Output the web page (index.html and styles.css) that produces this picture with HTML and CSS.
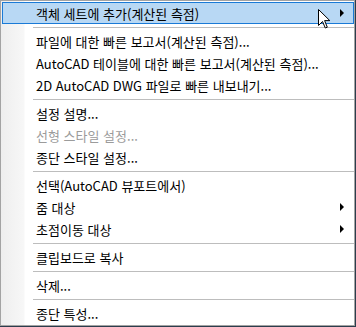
FILE: index.html
```html
<!DOCTYPE html>
<html lang="ko">
<head>
<meta charset="utf-8">
<title>Menu</title>
<link rel="stylesheet" href="styles.css">
</head>
<body>
<div class="menu">
  <div class="item sub hl">객체 세트에 추가(계산된 측점)</div>
  <div class="sep"></div>
  <div class="item">파일에 대한 빠른 보고서(계산된 측점)...</div>
  <div class="item">AutoCAD 테이블에 대한 빠른 보고서(계산된 측점)...</div>
  <div class="item">2D AutoCAD DWG 파일로 빠른 내보내기...</div>
  <div class="sep"></div>
  <div class="item">설정 설명...</div>
  <div class="item disabled">선형 스타일 설정...</div>
  <div class="item">종단 스타일 설정...</div>
  <div class="sep"></div>
  <div class="item">선택(AutoCAD 뷰포트에서)</div>
  <div class="item sub">줌 대상</div>
  <div class="item sub">초점이동 대상</div>
  <div class="sep"></div>
  <div class="item">클립보드로 복사</div>
  <div class="sep"></div>
  <div class="item">삭제...</div>
  <div class="sep"></div>
  <div class="item">종단 특성...</div>
</div>
<svg class="cursor" width="13" height="21" viewBox="0 0 13 21">
  <path d="M0.5 0.5 L0.5 16.5 L4.5 12.5 L7.3 19 L9.3 18.2 L6.6 11.6 L11.8 11.6 Z" fill="#fff" stroke="#000" stroke-width="1" stroke-linejoin="miter"/>
</svg>
</body>
</html>
```

FILE: styles.css
```css
html, body {
  margin: 0;
  padding: 0;
}
body {
  background: #2c3d4d;
  width: 356px;
  height: 327px;
  overflow: hidden;
  position: relative;
  font-family: "Noto Sans CJK KR", "Malgun Gothic", sans-serif;
  font-size: 13px;
  color: #000;
}
.menu {
  width: 352px;
  border: 1px solid #a3a3a3;
  padding: 1px 0 1px 1px;
  background: linear-gradient(to right, #eeeeee 0, #f7f7f7 23px, #ffffff 24px);
}
.item {
  height: 22px;
  display: flex;
  align-items: center;
  padding-left: 34px;
  position: relative;
  white-space: nowrap;
}
.item.disabled {
  color: #9b9b9b;
}
.item.hl {
  background: #b8d8f4;
  box-shadow: inset 0 0 0 1px #1a7ad6;
}
.item.sub::after {
  content: "";
  position: absolute;
  right: 10px;
  top: 7px;
  border-left: 4px solid #000;
  border-top: 4px solid transparent;
  border-bottom: 4px solid transparent;
}
.sep {
  height: 6px;
  margin-left: 31px;
  display: flex;
  align-items: center;
}
.sep::before {
  content: "";
  display: block;
  width: 100%;
  height: 1px;
  background: #bdbdbd;
}
.cursor {
  position: absolute;
  left: 318px;
  top: 9px;
}
```
